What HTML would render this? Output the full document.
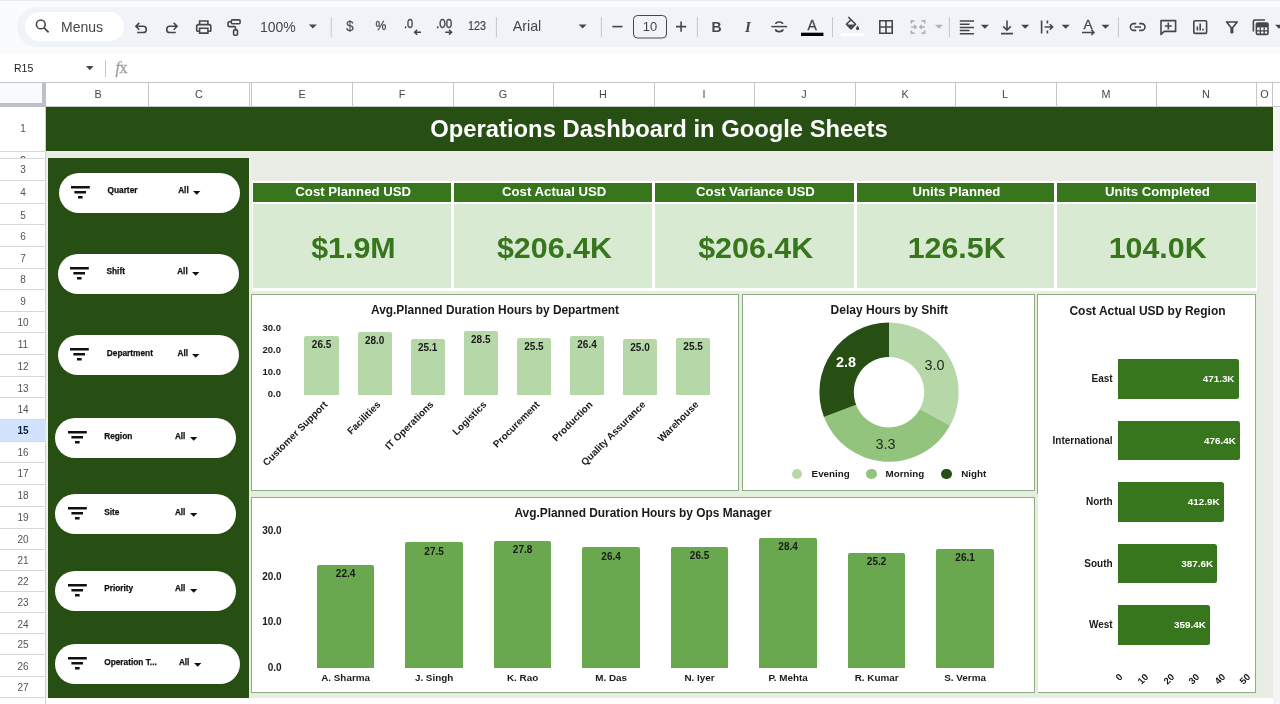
<!DOCTYPE html>
<html><head><meta charset="utf-8"><title>Operations Dashboard in Google Sheets</title>
<style>
*{box-sizing:border-box;margin:0;padding:0}
html,body{width:1280px;height:704px;overflow:hidden;background:#f9fbfd;font-family:"Liberation Sans",sans-serif;}
body{position:relative;will-change:transform}
.a{position:absolute}
.t{position:absolute;white-space:nowrap;line-height:1}
.c{transform:translate(-50%,-50%)}
.r{transform:translate(-100%,-50%)}
.l{transform:translate(0,-50%)}
.b{font-weight:bold}
svg{position:absolute;overflow:visible}
</style></head><body>

<div class="a" style="left:0px;top:0px;width:1280px;height:1px;background:#e7e9ee;"></div>
<div class="a" style="left:17px;top:7px;width:1300px;height:40px;background:#f0f3f8;border-radius:20px 0 0 20px;"></div>
<div class="a" style="left:25px;top:12px;width:99px;height:29px;background:#fff;border-radius:15px;"></div>
<div class="a" style="left:0px;top:55px;width:1280px;height:28px;background:#fff;"></div>
<div class="a" style="left:0px;top:82px;width:1280px;height:1px;background:#c4c7c5;"></div>
<svg style="left:0;top:0" width="1280" height="60" viewBox="0 0 1280 60"><circle cx="40.8" cy="24.4" r="4.4" fill="none" stroke="#444746" stroke-width="1.6"/><path d="M44 27.7L48.6 32.4" fill="none" stroke="#444746" stroke-width="1.7"/><path d="M139.3 22.9L135.9 26.3L139.3 29.7M136.2 26.3H143.2A3.1 3.1 0 0 1 143.2 32.5H137.2" fill="none" stroke="#444746" stroke-width="1.6" stroke-linejoin="miter"/><path d="M173.7 22.9L177.1 26.3L173.7 29.7M176.8 26.3H169.8A3.1 3.1 0 0 0 169.8 32.5H175.8" fill="none" stroke="#444746" stroke-width="1.6"/><path d="M199.6 24.6V21H207.9V24.6M199.6 31.2H197.3A0.8 0.8 0 0 1 196.7 30.4V26.4A1.8 1.8 0 0 1 198.5 24.6H209A1.8 1.8 0 0 1 210.8 26.4V30.4A0.8 0.8 0 0 1 210 31.2H207.9M199.6 28.3H207.9V33.1H199.6Z" fill="none" stroke="#444746" stroke-width="1.6"/><rect x="231.3" y="19.9" width="8.8" height="3.8" rx="1.1" fill="none" stroke="#444746" stroke-width="1.6"/><path d="M231.3 21.8H229.2A1.2 1.2 0 0 0 228 23V25.4A1.2 1.2 0 0 0 229.2 26.6H234.4A1.1 1.1 0 0 1 235.5 27.7V29.6" fill="none" stroke="#444746" stroke-width="1.6"/><rect x="233.6" y="29.9" width="3.9" height="5.3" rx="1" fill="none" stroke="#444746" stroke-width="1.6"/><path d="M308.8 24.6h8l-4.0 4z" fill="#444746"/><rect x="330.7" y="17" width="1" height="20" fill="#c7c7c7"/><path d="M421 32.2H414.6M417.2 29.8L414.6 32.2L417.2 34.6" fill="none" stroke="#444746" stroke-width="1.5"/><path d="M445.2 32.2H451.6M449 29.8L451.6 32.2L449 34.6" fill="none" stroke="#444746" stroke-width="1.5"/><rect x="495.9" y="17" width="1" height="20" fill="#c7c7c7"/><path d="M578.6 24.6h8l-4.0 4z" fill="#444746"/><rect x="600.9" y="17" width="1" height="20" fill="#c7c7c7"/><path d="M612.3 26.6H622.5" fill="none" stroke="#444746" stroke-width="1.6"/><rect x="633.5" y="15.5" width="33" height="22.5" rx="4" fill="none" stroke="#444746" stroke-width="1"/><path d="M676 26.6H686.2M681.1 21.5V31.7" fill="none" stroke="#444746" stroke-width="1.6"/><rect x="696.9" y="17" width="1" height="20" fill="#c7c7c7"/><path d="M771.3 26.6H787.1" fill="none" stroke="#444746" stroke-width="1.5"/><path d="M782.6 24.1C782.6 21.3 775.8 21.3 775.8 24.1M775.6 29.2C775.6 32.3 782.9 32.3 782.9 29.2" fill="none" stroke="#444746" stroke-width="1.7"/><rect x="801" y="32.7" width="22.4" height="3.3" fill="#000"/><rect x="832.0" y="17" width="1" height="20" fill="#c7c7c7"/><g transform="translate(0,-1.6)"><path d="M848.3 18.6L855.6 25.9L851 30.5L846.4 25.9L851 21.3" fill="none" stroke="#444746" stroke-width="1.6" stroke-linejoin="round"/><path d="M846.6 26H855.4L851 30.4Z" fill="#444746"/><path d="M857.6 27.2C858.6 28.6 859.2 29.4 859.2 30.2A1.6 1.6 0 0 1 856 30.2C856 29.4 856.6 28.6 857.6 27.2Z" fill="#444746"/></g><rect x="840.6" y="33" width="23.2" height="3.2" fill="#fff"/><path d="M879.8 20.8H892.2V33.2H879.8ZM886 20.8V33.2M879.8 27H892.2" fill="none" stroke="#444746" stroke-width="1.6"/><path d="M914.5 20.8H911.3V23.6M921.5 20.8H924.7V23.6M914.5 33.2H911.3V30.4M921.5 33.2H924.7V30.4M911 27H916M914.2 25.2L916 27L914.2 28.8M925 27H920M921.8 25.2L920 27L921.8 28.8" fill="none" stroke="#b0b3b5" stroke-width="1.7"/><path d="M935.0 24.8h8l-4.0 4z" fill="#b0b3b5"/><rect x="948.9" y="17" width="1" height="20" fill="#c7c7c7"/><path d="M959.8 21H974M959.8 24.2H969.5M959.8 27.4H974M959.8 30.6H969.5M959.8 33.8H974" fill="none" stroke="#444746" stroke-width="1.5"/><path d="M980.9 24.8h8l-4.0 4z" fill="#444746"/><path d="M1007 20.4V30M1003.2 26.4L1007 30.2L1010.8 26.4M1001 33.6H1013" fill="none" stroke="#444746" stroke-width="1.6"/><path d="M1021.2 24.8h8l-4.0 4z" fill="#444746"/><path d="M1041.6 20.6V33.4M1047.4 20.6V23.4M1047.4 30.6V33.4M1044.6 27H1052.6M1049.8 24.2L1052.6 27L1049.8 29.8" fill="none" stroke="#444746" stroke-width="1.6"/><path d="M1061.7 24.8h8l-4.0 4z" fill="#444746"/><path d="M1082 32.4H1094M1091.4 29.8L1094 32.4L1091.4 35" fill="none" stroke="#444746" stroke-width="1.5"/><path d="M1101.5 24.8h8l-4.0 4z" fill="#444746"/><rect x="1117.9" y="17" width="1" height="20" fill="#c7c7c7"/><path d="M1136.2 23.6H1133.8A3.4 3.4 0 0 0 1133.8 30.4H1136.2M1139.2 23.6H1141.6A3.4 3.4 0 0 1 1141.6 30.4H1139.2M1134.4 27H1141" fill="none" stroke="#444746" stroke-width="1.6"/><path d="M1161 20.6H1175.6V31.4H1164.2L1161 34.4Z" fill="none" stroke="#444746" stroke-width="1.6" stroke-linejoin="round"/><path d="M1164.8 26H1171.8M1168.3 22.6V29.4" fill="none" stroke="#444746" stroke-width="1.6"/><rect x="1193.8" y="20.8" width="12.8" height="12.6" rx="1.2" fill="none" stroke="#444746" stroke-width="1.6"/><path d="M1197.4 30.6V26.4M1200.2 30.6V23.6M1203 30.6V28.8" fill="none" stroke="#444746" stroke-width="1.6"/><path d="M1226.6 22H1237.2L1232.6 27.8V32.6H1231.2V27.8Z" fill="none" stroke="#444746" stroke-width="1.6" stroke-linejoin="round"/><path d="M1253.4 31.4V21.2A1.2 1.2 0 0 1 1254.6 20H1265" fill="none" stroke="#444746" stroke-width="1.6"/><rect x="1256.4" y="23" width="11.6" height="11.4" rx="1.2" fill="none" stroke="#444746" stroke-width="1.6"/><rect x="1256.4" y="23" width="11.6" height="4.4" fill="#444746"/><path d="M1260.3 27.2V34.4M1264.2 27.2V34.4M1256.4 30.9H1268" fill="none" stroke="#444746" stroke-width="1.3"/><path d="M1275.0 24.8h8l-4.0 4z" fill="#444746"/></svg>
<div class="t l" style="left:61px;top:27px;font-size:14px;color:#444746;">Menus</div>
<div class="t l" style="left:260px;top:27px;font-size:14px;color:#444746;">100%</div>
<div class="t c" style="left:349.8px;top:26.3px;font-size:14px;color:#444746;-webkit-text-stroke:0.15px #444746;transform:translate(-50%,-50%) scale(0.95,1);">$</div>
<div class="t c" style="left:381.2px;top:26.3px;font-size:13.5px;color:#444746;-webkit-text-stroke:0.3px #444746;transform:translate(-50%,-50%) scale(0.9,1);">%</div>
<div class="t l" style="left:404.4px;top:23.9px;font-size:13.6px;color:#444746;-webkit-text-stroke:0.4px #444746;transform-origin:0 50%;transform:translate(0,-50%) scale(0.82,0.96);">.0</div>
<div class="t l" style="left:436px;top:23.9px;font-size:13.6px;color:#444746;-webkit-text-stroke:0.4px #444746;transform-origin:0 50%;transform:translate(0,-50%) scale(0.86,0.96);">.00</div>
<div class="t c" style="left:477px;top:25.8px;font-size:12px;color:#444746;-webkit-text-stroke:0.2px #444746;transform:translate(-50%,-50%) scale(0.9,1);">123</div>
<div class="t l" style="left:512.7px;top:25.8px;font-size:14.3px;color:#444746;">Arial</div>
<div class="t c" style="left:649.8px;top:26.6px;font-size:13.6px;color:#444746;transform:translate(-50%,-50%) scale(0.95,1);">10</div>
<div class="t c" style="left:716.5px;top:27px;font-size:14px;color:#444746;font-weight:bold">B</div>
<div class="t c" style="left:748px;top:27px;font-size:15px;color:#444746;font-weight:bold;font-family:'Liberation Serif',serif"><i>I</i></div>
<div class="t c" style="left:812.2px;top:25px;font-size:14px;color:#444746;-webkit-text-stroke:0.3px #444746">A</div>
<div class="t c" style="left:1088px;top:25px;font-size:13.6px;color:#444746;-webkit-text-stroke:0.3px #444746">A</div>
<div class="t l" style="left:14px;top:68px;font-size:10.5px;color:#202124;">R15</div>
<svg style="left:85.6px;top:66px" width="7.6" height="4.2" viewBox="0 0 7.6 4.2"><path d="M0 0h7.6L3.8 4.2z" fill="#444746"/></svg>
<div class="a" style="left:105px;top:60px;width:1px;height:17px;background:#c7c7c7;"></div>
<div class="t l" style="left:115.5px;top:68px;font-size:16px;color:#9c9fa2;font-family:'Liberation Serif',serif;letter-spacing:-0.5px;-webkit-text-stroke:0.3px #9c9fa2;"><i>f</i>x</div>
<div class="a" style="left:0px;top:83px;width:1280px;height:24px;background:#fff;"></div>
<div class="a" style="left:0px;top:83px;width:42px;height:20px;background:#f8fafd;"></div>
<div class="a" style="left:41.5px;top:83px;width:4px;height:24px;background:#bdc1c6;"></div>
<div class="a" style="left:0px;top:102.5px;width:45.5px;height:4px;background:#bdc1c6;"></div>
<div class="a" style="left:46px;top:106px;width:1234px;height:1px;background:#c4c7c5;"></div>
<div class="t c" style="left:98px;top:94.4px;font-size:10.8px;color:#444746;">B</div>
<div class="t c" style="left:199px;top:94.4px;font-size:10.8px;color:#444746;">C</div>
<div class="t c" style="left:302px;top:94.4px;font-size:10.8px;color:#444746;">E</div>
<div class="t c" style="left:402px;top:94.4px;font-size:10.8px;color:#444746;">F</div>
<div class="t c" style="left:503px;top:94.4px;font-size:10.8px;color:#444746;">G</div>
<div class="t c" style="left:603px;top:94.4px;font-size:10.8px;color:#444746;">H</div>
<div class="t c" style="left:704px;top:94.4px;font-size:10.8px;color:#444746;">I</div>
<div class="t c" style="left:804px;top:94.4px;font-size:10.8px;color:#444746;">J</div>
<div class="t c" style="left:905px;top:94.4px;font-size:10.8px;color:#444746;">K</div>
<div class="t c" style="left:1005px;top:94.4px;font-size:10.8px;color:#444746;">L</div>
<div class="t c" style="left:1106px;top:94.4px;font-size:10.8px;color:#444746;">M</div>
<div class="t c" style="left:1206px;top:94.4px;font-size:10.8px;color:#444746;">N</div>
<div class="t c" style="left:1264.5px;top:94.4px;font-size:10.8px;color:#444746;">O</div>
<div class="a" style="left:148.0px;top:83px;width:1px;height:23px;background:#c4c7c5;"></div>
<div class="a" style="left:249.0px;top:83px;width:1px;height:23px;background:#c4c7c5;"></div>
<div class="a" style="left:251.0px;top:83px;width:1px;height:23px;background:#c4c7c5;"></div>
<div class="a" style="left:352.0px;top:83px;width:1px;height:23px;background:#c4c7c5;"></div>
<div class="a" style="left:452.5px;top:83px;width:1px;height:23px;background:#c4c7c5;"></div>
<div class="a" style="left:553.0px;top:83px;width:1px;height:23px;background:#c4c7c5;"></div>
<div class="a" style="left:653.5px;top:83px;width:1px;height:23px;background:#c4c7c5;"></div>
<div class="a" style="left:754.0px;top:83px;width:1px;height:23px;background:#c4c7c5;"></div>
<div class="a" style="left:854.5px;top:83px;width:1px;height:23px;background:#c4c7c5;"></div>
<div class="a" style="left:955.0px;top:83px;width:1px;height:23px;background:#c4c7c5;"></div>
<div class="a" style="left:1055.5px;top:83px;width:1px;height:23px;background:#c4c7c5;"></div>
<div class="a" style="left:1156.0px;top:83px;width:1px;height:23px;background:#c4c7c5;"></div>
<div class="a" style="left:1256.0px;top:83px;width:1px;height:23px;background:#c4c7c5;"></div>
<div class="a" style="left:1272.0px;top:83px;width:1px;height:23px;background:#c4c7c5;"></div>
<div class="a" style="left:0px;top:107px;width:46px;height:597px;background:#fff;"></div>
<div class="a" style="left:45px;top:107px;width:1px;height:597px;background:#cfd2d0;"></div>
<div class="a" style="left:0px;top:419.5px;width:45.5px;height:21.5px;background:#d3e3fd;"></div>
<div class="a" style="left:0px;top:150.5px;width:46px;height:1px;background:#d5d8d6;"></div>
<div class="a" style="left:0px;top:157.5px;width:46px;height:1px;background:#d5d8d6;"></div>
<div class="a" style="left:0px;top:180.0px;width:46px;height:1px;background:#d5d8d6;"></div>
<div class="a" style="left:0px;top:202.5px;width:46px;height:1px;background:#d5d8d6;"></div>
<div class="a" style="left:0px;top:224.0px;width:46px;height:1px;background:#d5d8d6;"></div>
<div class="a" style="left:0px;top:246.0px;width:46px;height:1px;background:#d5d8d6;"></div>
<div class="a" style="left:0px;top:268.0px;width:46px;height:1px;background:#d5d8d6;"></div>
<div class="a" style="left:0px;top:289.0px;width:46px;height:1px;background:#d5d8d6;"></div>
<div class="a" style="left:0px;top:310.5px;width:46px;height:1px;background:#d5d8d6;"></div>
<div class="a" style="left:0px;top:332.0px;width:46px;height:1px;background:#d5d8d6;"></div>
<div class="a" style="left:0px;top:354.0px;width:46px;height:1px;background:#d5d8d6;"></div>
<div class="a" style="left:0px;top:375.5px;width:46px;height:1px;background:#d5d8d6;"></div>
<div class="a" style="left:0px;top:397.0px;width:46px;height:1px;background:#d5d8d6;"></div>
<div class="a" style="left:0px;top:419.0px;width:46px;height:1px;background:#d5d8d6;"></div>
<div class="a" style="left:0px;top:440.5px;width:46px;height:1px;background:#d5d8d6;"></div>
<div class="a" style="left:0px;top:462.0px;width:46px;height:1px;background:#d5d8d6;"></div>
<div class="a" style="left:0px;top:483.9px;width:46px;height:1px;background:#d5d8d6;"></div>
<div class="a" style="left:0px;top:505.5px;width:46px;height:1px;background:#d5d8d6;"></div>
<div class="a" style="left:0px;top:527.5px;width:46px;height:1px;background:#d5d8d6;"></div>
<div class="a" style="left:0px;top:548.9px;width:46px;height:1px;background:#d5d8d6;"></div>
<div class="a" style="left:0px;top:570.0px;width:46px;height:1px;background:#d5d8d6;"></div>
<div class="a" style="left:0px;top:591.2px;width:46px;height:1px;background:#d5d8d6;"></div>
<div class="a" style="left:0px;top:612.3px;width:46px;height:1px;background:#d5d8d6;"></div>
<div class="a" style="left:0px;top:633.1px;width:46px;height:1px;background:#d5d8d6;"></div>
<div class="a" style="left:0px;top:654.2px;width:46px;height:1px;background:#d5d8d6;"></div>
<div class="a" style="left:0px;top:675.7px;width:46px;height:1px;background:#d5d8d6;"></div>
<div class="a" style="left:0px;top:697.0px;width:46px;height:1px;background:#d5d8d6;"></div>
<div class="t c" style="left:23px;top:128.6px;font-size:10px;color:#50545a;">1</div>
<div class="t c" style="left:23px;top:169.6px;font-size:10px;color:#50545a;">3</div>
<div class="t c" style="left:23px;top:192.6px;font-size:10px;color:#50545a;">4</div>
<div class="t c" style="left:23px;top:215.6px;font-size:10px;color:#50545a;">5</div>
<div class="t c" style="left:23px;top:236.6px;font-size:10px;color:#50545a;">6</div>
<div class="t c" style="left:23px;top:258.6px;font-size:10px;color:#50545a;">7</div>
<div class="t c" style="left:23px;top:279.6px;font-size:10px;color:#50545a;">8</div>
<div class="t c" style="left:23px;top:301.6px;font-size:10px;color:#50545a;">9</div>
<div class="t c" style="left:23px;top:322.6px;font-size:10px;color:#50545a;">10</div>
<div class="t c" style="left:23px;top:344.6px;font-size:10px;color:#50545a;">11</div>
<div class="t c" style="left:23px;top:366.6px;font-size:10px;color:#50545a;">12</div>
<div class="t c" style="left:23px;top:388.6px;font-size:10px;color:#50545a;">13</div>
<div class="t c" style="left:23px;top:409.6px;font-size:10px;color:#50545a;">14</div>
<div class="t c b" style="left:23px;top:430.6px;font-size:10px;color:#041e49;">15</div>
<div class="t c" style="left:23px;top:452.6px;font-size:10px;color:#50545a;">16</div>
<div class="t c" style="left:23px;top:473.6px;font-size:10px;color:#50545a;">17</div>
<div class="t c" style="left:23px;top:495.6px;font-size:10px;color:#50545a;">18</div>
<div class="t c" style="left:23px;top:517.6px;font-size:10px;color:#50545a;">19</div>
<div class="t c" style="left:23px;top:539.6px;font-size:10px;color:#50545a;">20</div>
<div class="t c" style="left:23px;top:560.6px;font-size:10px;color:#50545a;">21</div>
<div class="t c" style="left:23px;top:581.6px;font-size:10px;color:#50545a;">22</div>
<div class="t c" style="left:23px;top:602.6px;font-size:10px;color:#50545a;">23</div>
<div class="t c" style="left:23px;top:624.6px;font-size:10px;color:#50545a;">24</div>
<div class="t c" style="left:23px;top:644.6px;font-size:10px;color:#50545a;">25</div>
<div class="t c" style="left:23px;top:666.6px;font-size:10px;color:#50545a;">26</div>
<div class="t c" style="left:23px;top:687.6px;font-size:10px;color:#50545a;">27</div>
<div class="a" style="left:0;top:151.5px;width:45px;height:6px;overflow:hidden"><div class="t c" style="left:23px;top:8.5px;font-size:10.5px;color:#444746">2</div></div>
<div class="a" style="left:46px;top:107px;width:1234px;height:597px;background:#fff;"></div>
<div class="a" style="left:1273px;top:107px;width:7px;height:597px;background:#f4f5f4;"></div>
<div class="a" style="left:46px;top:151px;width:1227px;height:546.5px;background:#e9ede6;"></div>
<div class="a" style="left:46px;top:107px;width:1227px;height:44px;background:#274e13;"></div>
<div class="t c b" style="left:659px;top:128.8px;font-size:23.8px;color:#fff;">Operations Dashboard in Google Sheets</div>
<div class="a" style="left:46px;top:158px;width:205px;height:539.5px;background:#edf3e8;"></div>
<div class="a" style="left:48px;top:158px;width:201px;height:539.5px;background:#274e13;"></div>
<div class="a" style="left:58.5px;top:173px;width:181.5px;height:40px;background:#fff;border-radius:20px;"></div>
<svg style="left:71.1px;top:186.1px" width="19" height="13" viewBox="0 0 19 13"><path d="M0 0h18.8v2.4H0zM3.4 5h11.6v2.4H3.4zM7 10h4.6v2.4H7z" fill="#111"/></svg>
<div class="t l b" style="left:107.5px;top:190.0px;font-size:8.3px;color:#111;-webkit-text-stroke:0.25px #111;">Quarter</div>
<div class="t l b" style="left:178.2px;top:191.1px;font-size:8.2px;color:#111;-webkit-text-stroke:0.25px #111;">All</div>
<svg style="left:193.0px;top:190.8px" width="7.4" height="3.7" viewBox="0 0 7.4 3.7"><path d="M0 0h7.4L3.7 3.7z" fill="#111"/></svg>
<div class="a" style="left:57.5px;top:254px;width:181.5px;height:40px;background:#fff;border-radius:20px;"></div>
<svg style="left:70.1px;top:267.1px" width="19" height="13" viewBox="0 0 19 13"><path d="M0 0h18.8v2.4H0zM3.4 5h11.6v2.4H3.4zM7 10h4.6v2.4H7z" fill="#111"/></svg>
<div class="t l b" style="left:106.5px;top:271.0px;font-size:8.3px;color:#111;-webkit-text-stroke:0.25px #111;">Shift</div>
<div class="t l b" style="left:177.2px;top:272.1px;font-size:8.2px;color:#111;-webkit-text-stroke:0.25px #111;">All</div>
<svg style="left:192.0px;top:271.8px" width="7.4" height="3.7" viewBox="0 0 7.4 3.7"><path d="M0 0h7.4L3.7 3.7z" fill="#111"/></svg>
<div class="a" style="left:57.8px;top:335px;width:181.5px;height:40px;background:#fff;border-radius:20px;"></div>
<svg style="left:70.4px;top:348.1px" width="19" height="13" viewBox="0 0 19 13"><path d="M0 0h18.8v2.4H0zM3.4 5h11.6v2.4H3.4zM7 10h4.6v2.4H7z" fill="#111"/></svg>
<div class="t l b" style="left:106.8px;top:353.2px;font-size:8.3px;color:#111;-webkit-text-stroke:0.25px #111;">Department</div>
<div class="t l b" style="left:177.5px;top:354.3px;font-size:8.2px;color:#111;-webkit-text-stroke:0.25px #111;">All</div>
<svg style="left:192.3px;top:354.0px" width="7.4" height="3.7" viewBox="0 0 7.4 3.7"><path d="M0 0h7.4L3.7 3.7z" fill="#111"/></svg>
<div class="a" style="left:55.2px;top:418px;width:180.5px;height:40px;background:#fff;border-radius:20px;"></div>
<svg style="left:67.8px;top:431.1px" width="19" height="13" viewBox="0 0 19 13"><path d="M0 0h18.8v2.4H0zM3.4 5h11.6v2.4H3.4zM7 10h4.6v2.4H7z" fill="#111"/></svg>
<div class="t l b" style="left:104.2px;top:435.7px;font-size:8.3px;color:#111;-webkit-text-stroke:0.25px #111;">Region</div>
<div class="t l b" style="left:174.9px;top:436.8px;font-size:8.2px;color:#111;-webkit-text-stroke:0.25px #111;">All</div>
<svg style="left:189.7px;top:436.5px" width="7.4" height="3.7" viewBox="0 0 7.4 3.7"><path d="M0 0h7.4L3.7 3.7z" fill="#111"/></svg>
<div class="a" style="left:55.2px;top:493.7px;width:180.7px;height:40px;background:#fff;border-radius:20px;"></div>
<svg style="left:67.8px;top:506.8px" width="19" height="13" viewBox="0 0 19 13"><path d="M0 0h18.8v2.4H0zM3.4 5h11.6v2.4H3.4zM7 10h4.6v2.4H7z" fill="#111"/></svg>
<div class="t l b" style="left:104.2px;top:512.0px;font-size:8.3px;color:#111;-webkit-text-stroke:0.25px #111;">Site</div>
<div class="t l b" style="left:174.9px;top:513.1px;font-size:8.2px;color:#111;-webkit-text-stroke:0.25px #111;">All</div>
<svg style="left:189.7px;top:512.8px" width="7.4" height="3.7" viewBox="0 0 7.4 3.7"><path d="M0 0h7.4L3.7 3.7z" fill="#111"/></svg>
<div class="a" style="left:55.2px;top:570.6px;width:180.7px;height:40px;background:#fff;border-radius:20px;"></div>
<svg style="left:67.8px;top:583.7px" width="19" height="13" viewBox="0 0 19 13"><path d="M0 0h18.8v2.4H0zM3.4 5h11.6v2.4H3.4zM7 10h4.6v2.4H7z" fill="#111"/></svg>
<div class="t l b" style="left:104.2px;top:588.2px;font-size:8.3px;color:#111;-webkit-text-stroke:0.25px #111;">Priority</div>
<div class="t l b" style="left:174.9px;top:589.3px;font-size:8.2px;color:#111;-webkit-text-stroke:0.25px #111;">All</div>
<svg style="left:189.7px;top:589.0px" width="7.4" height="3.7" viewBox="0 0 7.4 3.7"><path d="M0 0h7.4L3.7 3.7z" fill="#111"/></svg>
<div class="a" style="left:55.2px;top:644.3px;width:184.8px;height:40px;background:#fff;border-radius:20px;"></div>
<svg style="left:67.8px;top:657.4px" width="19" height="13" viewBox="0 0 19 13"><path d="M0 0h18.8v2.4H0zM3.4 5h11.6v2.4H3.4zM7 10h4.6v2.4H7z" fill="#111"/></svg>
<div class="t l b" style="left:104.2px;top:662.3px;font-size:8.3px;color:#111;-webkit-text-stroke:0.25px #111;">Operation T...</div>
<div class="t l b" style="left:178.9px;top:663.4px;font-size:8.2px;color:#111;-webkit-text-stroke:0.25px #111;">All</div>
<svg style="left:193.7px;top:663.1px" width="7.4" height="3.7" viewBox="0 0 7.4 3.7"><path d="M0 0h7.4L3.7 3.7z" fill="#111"/></svg>
<div class="a" style="left:251.5px;top:180.5px;width:1005.5px;height:110px;background:#fff;"></div>
<div class="a" style="left:253px;top:182.5px;width:198px;height:19px;background:#38761d;"></div>
<div class="a" style="left:253px;top:204px;width:198px;height:84px;background:#d9ead3;"></div>
<div class="t c b" style="left:353.2px;top:192.3px;font-size:13.2px;color:#fff;">Cost Planned USD</div>
<div class="t c b" style="left:353.4px;top:246.8px;font-size:30.4px;color:#38761d;">$1.9M</div>
<div class="a" style="left:454px;top:182.5px;width:198px;height:19px;background:#38761d;"></div>
<div class="a" style="left:454px;top:204px;width:198px;height:84px;background:#d9ead3;"></div>
<div class="t c b" style="left:554.2px;top:192.3px;font-size:13.2px;color:#fff;">Cost Actual USD</div>
<div class="t c b" style="left:554.4px;top:246.8px;font-size:30.4px;color:#38761d;">$206.4K</div>
<div class="a" style="left:655px;top:182.5px;width:198.5px;height:19px;background:#38761d;"></div>
<div class="a" style="left:655px;top:204px;width:198.5px;height:84px;background:#d9ead3;"></div>
<div class="t c b" style="left:755.45px;top:192.3px;font-size:13.2px;color:#fff;">Cost Variance USD</div>
<div class="t c b" style="left:755.65px;top:246.8px;font-size:30.4px;color:#38761d;">$206.4K</div>
<div class="a" style="left:856.5px;top:182.5px;width:197.5px;height:19px;background:#38761d;"></div>
<div class="a" style="left:856.5px;top:204px;width:197.5px;height:84px;background:#d9ead3;"></div>
<div class="t c b" style="left:956.45px;top:192.3px;font-size:13.2px;color:#fff;">Units Planned</div>
<div class="t c b" style="left:956.65px;top:246.8px;font-size:30.4px;color:#38761d;">126.5K</div>
<div class="a" style="left:1057px;top:182.5px;width:198.5px;height:19px;background:#38761d;"></div>
<div class="a" style="left:1057px;top:204px;width:198.5px;height:84px;background:#d9ead3;"></div>
<div class="t c b" style="left:1157.45px;top:192.3px;font-size:13.2px;color:#fff;">Units Completed</div>
<div class="t c b" style="left:1157.65px;top:246.8px;font-size:30.4px;color:#38761d;">104.0K</div>
<div class="a" style="left:249.0px;top:291.5px;width:492.5px;height:201.5px;background:#e4f0dc;"></div>
<div class="a" style="left:250.5px;top:294px;width:488.5px;height:196.5px;background:#fff;border:1px solid #8fab87;"></div>
<div class="t c b" style="left:495px;top:311px;font-size:11.9px;color:#1a1a1a;">Avg.Planned Duration Hours by Department</div>
<div class="t r b" style="left:281px;top:328px;font-size:9.5px;color:#1a1a1a;">30.0</div>
<div class="t r b" style="left:281px;top:350px;font-size:9.5px;color:#1a1a1a;">20.0</div>
<div class="t r b" style="left:281px;top:372px;font-size:9.5px;color:#1a1a1a;">10.0</div>
<div class="t r b" style="left:281px;top:394px;font-size:9.5px;color:#1a1a1a;">0.0</div>
<div class="a" style="left:304.4px;top:335.5px;width:34.4px;height:59.2px;background:#b6d7a8;border-radius:2px 2px 0 0;"></div>
<div class="t c b" style="left:321.6px;top:344.6px;font-size:10px;color:#1a1a1a;">26.5</div>
<div class="t b" style="left:325.9px;top:403.0px;font-size:9.9px;color:#1a1a1a;transform-origin:100% 50%;transform:translate(-100%,-50%) rotate(-45deg)">Customer Support</div>
<div class="a" style="left:357.5px;top:332.1px;width:34.4px;height:62.6px;background:#b6d7a8;border-radius:2px 2px 0 0;"></div>
<div class="t c b" style="left:374.7px;top:341.2px;font-size:10px;color:#1a1a1a;">28.0</div>
<div class="t b" style="left:379.0px;top:403.0px;font-size:9.9px;color:#1a1a1a;transform-origin:100% 50%;transform:translate(-100%,-50%) rotate(-45deg)">Facilities</div>
<div class="a" style="left:410.5px;top:338.6px;width:34.4px;height:56.1px;background:#b6d7a8;border-radius:2px 2px 0 0;"></div>
<div class="t c b" style="left:427.7px;top:347.7px;font-size:10px;color:#1a1a1a;">25.1</div>
<div class="t b" style="left:432.0px;top:403.0px;font-size:9.9px;color:#1a1a1a;transform-origin:100% 50%;transform:translate(-100%,-50%) rotate(-45deg)">IT Operations</div>
<div class="a" style="left:463.6px;top:331.0px;width:34.4px;height:63.7px;background:#b6d7a8;border-radius:2px 2px 0 0;"></div>
<div class="t c b" style="left:480.8px;top:340.1px;font-size:10px;color:#1a1a1a;">28.5</div>
<div class="t b" style="left:485.1px;top:403.0px;font-size:9.9px;color:#1a1a1a;transform-origin:100% 50%;transform:translate(-100%,-50%) rotate(-45deg)">Logistics</div>
<div class="a" style="left:516.7px;top:337.7px;width:34.4px;height:57.0px;background:#b6d7a8;border-radius:2px 2px 0 0;"></div>
<div class="t c b" style="left:533.9px;top:346.8px;font-size:10px;color:#1a1a1a;">25.5</div>
<div class="t b" style="left:538.2px;top:403.0px;font-size:9.9px;color:#1a1a1a;transform-origin:100% 50%;transform:translate(-100%,-50%) rotate(-45deg)">Procurement</div>
<div class="a" style="left:569.8px;top:335.7px;width:34.4px;height:59.0px;background:#b6d7a8;border-radius:2px 2px 0 0;"></div>
<div class="t c b" style="left:587.0px;top:344.8px;font-size:10px;color:#1a1a1a;">26.4</div>
<div class="t b" style="left:591.2px;top:403.0px;font-size:9.9px;color:#1a1a1a;transform-origin:100% 50%;transform:translate(-100%,-50%) rotate(-45deg)">Production</div>
<div class="a" style="left:622.8px;top:338.8px;width:34.4px;height:55.9px;background:#b6d7a8;border-radius:2px 2px 0 0;"></div>
<div class="t c b" style="left:640.0px;top:347.9px;font-size:10px;color:#1a1a1a;">25.0</div>
<div class="t b" style="left:644.3px;top:403.0px;font-size:9.9px;color:#1a1a1a;transform-origin:100% 50%;transform:translate(-100%,-50%) rotate(-45deg)">Quality Assurance</div>
<div class="a" style="left:675.9px;top:337.7px;width:34.4px;height:57.0px;background:#b6d7a8;border-radius:2px 2px 0 0;"></div>
<div class="t c b" style="left:693.1px;top:346.8px;font-size:10px;color:#1a1a1a;">25.5</div>
<div class="t b" style="left:697.4px;top:403.0px;font-size:9.9px;color:#1a1a1a;transform-origin:100% 50%;transform:translate(-100%,-50%) rotate(-45deg)">Warehouse</div>
<div class="a" style="left:740.3px;top:291.5px;width:297.2px;height:201.5px;background:#e4f0dc;"></div>
<div class="a" style="left:741.8px;top:294px;width:293.2px;height:196.5px;background:#fff;border:1px solid #8fab87;"></div>
<div class="t c b" style="left:889.3px;top:310px;font-size:12px;color:#1a1a1a;">Delay Hours by Shift</div>
<svg style="left:0;top:0" width="1280" height="704" viewBox="0 0 1280 704"><path d="M889.00 322.60A69.6 69.6 0 0 1 950.06 425.60L919.88 409.09A35.2 35.2 0 0 0 889.00 357.00Z" fill="#b6d7a8"/><path d="M950.06 425.60A69.6 69.6 0 0 1 823.92 416.88L856.09 404.68A35.2 35.2 0 0 0 919.88 409.09Z" fill="#93c47d"/><path d="M823.92 416.88A69.6 69.6 0 0 1 889.00 322.60L889.00 357.00A35.2 35.2 0 0 0 856.09 404.68Z" fill="#274e13"/></svg>
<div class="t c" style="left:934.4px;top:365.3px;font-size:14.4px;color:#1f2a1a;">3.0</div>
<div class="t c" style="left:885.5px;top:443.6px;font-size:14.4px;color:#1f2a1a;">3.3</div>
<div class="t c b" style="left:845.9px;top:362px;font-size:14.4px;color:#fff;">2.8</div>
<div class="a" style="left:791.6px;top:468.6px;width:10.8px;height:10.8px;background:#b6d7a8;border-radius:50%;"></div>
<div class="t l b" style="left:811.6px;top:474px;font-size:9.8px;color:#1a1a1a;">Evening</div>
<div class="a" style="left:866.4px;top:468.6px;width:10.8px;height:10.8px;background:#93c47d;border-radius:50%;"></div>
<div class="t l b" style="left:885.5px;top:474px;font-size:9.8px;color:#1a1a1a;">Morning</div>
<div class="a" style="left:941.2px;top:468.6px;width:10.8px;height:10.8px;background:#274e13;border-radius:50%;"></div>
<div class="t l b" style="left:961.2px;top:474px;font-size:9.8px;color:#1a1a1a;">Night</div>
<div class="a" style="left:1035.3px;top:291.5px;width:223.3px;height:404.2px;background:#e4f0dc;"></div>
<div class="a" style="left:1036.8px;top:294px;width:219.3px;height:399.2px;background:#fff;border:1px solid #8fab87;"></div>
<div class="t c b" style="left:1147.5px;top:311px;font-size:12px;color:#1a1a1a;">Cost Actual USD by Region</div>
<div class="a" style="left:1118px;top:359.2px;width:120.5px;height:39.4px;background:#38761d;border-radius:0 2.5px 2.5px 0;"></div>
<div class="t r b" style="left:1112.6px;top:379.2px;font-size:10px;color:#1a1a1a;">East</div>
<div class="t r b" style="left:1234.5px;top:379.4px;font-size:9.9px;color:#fff;">471.3K</div>
<div class="a" style="left:1118px;top:420.7px;width:121.8px;height:39.4px;background:#38761d;border-radius:0 2.5px 2.5px 0;"></div>
<div class="t r b" style="left:1112.6px;top:440.7px;font-size:10px;color:#1a1a1a;">International</div>
<div class="t r b" style="left:1235.8px;top:440.9px;font-size:9.9px;color:#fff;">476.4K</div>
<div class="a" style="left:1118px;top:482.2px;width:105.6px;height:39.4px;background:#38761d;border-radius:0 2.5px 2.5px 0;"></div>
<div class="t r b" style="left:1112.6px;top:502.2px;font-size:10px;color:#1a1a1a;">North</div>
<div class="t r b" style="left:1219.6px;top:502.4px;font-size:9.9px;color:#fff;">412.9K</div>
<div class="a" style="left:1118px;top:543.7px;width:99.1px;height:39.4px;background:#38761d;border-radius:0 2.5px 2.5px 0;"></div>
<div class="t r b" style="left:1112.6px;top:563.7px;font-size:10px;color:#1a1a1a;">South</div>
<div class="t r b" style="left:1213.1px;top:563.9px;font-size:9.9px;color:#fff;">387.6K</div>
<div class="a" style="left:1118px;top:605.2px;width:91.9px;height:39.4px;background:#38761d;border-radius:0 2.5px 2.5px 0;"></div>
<div class="t r b" style="left:1112.6px;top:625.2px;font-size:10px;color:#1a1a1a;">West</div>
<div class="t r b" style="left:1205.9px;top:625.4px;font-size:9.9px;color:#fff;">359.4K</div>
<div class="t b" style="left:1118.5px;top:676.6px;font-size:9.5px;color:#1a1a1a;transform:translate(-50%,-50%) rotate(-45deg)">0</div>
<div class="t b" style="left:1143.0px;top:678.9px;font-size:9.5px;color:#1a1a1a;transform:translate(-50%,-50%) rotate(-45deg)">10</div>
<div class="t b" style="left:1168.5px;top:678.9px;font-size:9.5px;color:#1a1a1a;transform:translate(-50%,-50%) rotate(-45deg)">20</div>
<div class="t b" style="left:1194.0px;top:678.9px;font-size:9.5px;color:#1a1a1a;transform:translate(-50%,-50%) rotate(-45deg)">30</div>
<div class="t b" style="left:1219.5px;top:678.9px;font-size:9.5px;color:#1a1a1a;transform:translate(-50%,-50%) rotate(-45deg)">40</div>
<div class="t b" style="left:1245.0px;top:678.9px;font-size:9.5px;color:#1a1a1a;transform:translate(-50%,-50%) rotate(-45deg)">50</div>
<div class="a" style="left:249.0px;top:494.1px;width:788.5px;height:201.8px;background:#e4f0dc;"></div>
<div class="a" style="left:250.5px;top:496.6px;width:784.5px;height:196.8px;background:#fff;border:1px solid #8fab87;"></div>
<div class="t c b" style="left:643px;top:514px;font-size:11.9px;color:#1a1a1a;">Avg.Planned Duration Hours by Ops Manager</div>
<div class="t r b" style="left:281.6px;top:530.6px;font-size:10px;color:#1a1a1a;">30.0</div>
<div class="t r b" style="left:281.6px;top:576.5px;font-size:10px;color:#1a1a1a;">20.0</div>
<div class="t r b" style="left:281.6px;top:622.3px;font-size:10px;color:#1a1a1a;">10.0</div>
<div class="t r b" style="left:281.6px;top:668.1px;font-size:10px;color:#1a1a1a;">0.0</div>
<div class="a" style="left:316.9px;top:564.6px;width:57.4px;height:103.7px;background:#6aa84f;border-radius:2px 2px 0 0;"></div>
<div class="t c b" style="left:345.6px;top:573.8px;font-size:10px;color:#1a1a1a;">22.4</div>
<div class="t c b" style="left:345.6px;top:678.4px;font-size:9.9px;color:#1a1a1a;">A. Sharma</div>
<div class="a" style="left:405.4px;top:542.3px;width:57.4px;height:126.0px;background:#6aa84f;border-radius:2px 2px 0 0;"></div>
<div class="t c b" style="left:434.1px;top:551.5px;font-size:10px;color:#1a1a1a;">27.5</div>
<div class="t c b" style="left:434.1px;top:678.4px;font-size:9.9px;color:#1a1a1a;">J. Singh</div>
<div class="a" style="left:493.9px;top:540.9px;width:57.4px;height:127.4px;background:#6aa84f;border-radius:2px 2px 0 0;"></div>
<div class="t c b" style="left:522.6px;top:550.1px;font-size:10px;color:#1a1a1a;">27.8</div>
<div class="t c b" style="left:522.6px;top:678.4px;font-size:9.9px;color:#1a1a1a;">K. Rao</div>
<div class="a" style="left:582.4px;top:547.3px;width:57.4px;height:121.0px;background:#6aa84f;border-radius:2px 2px 0 0;"></div>
<div class="t c b" style="left:611.1px;top:556.5px;font-size:10px;color:#1a1a1a;">26.4</div>
<div class="t c b" style="left:611.1px;top:678.4px;font-size:9.9px;color:#1a1a1a;">M. Das</div>
<div class="a" style="left:670.9px;top:546.9px;width:57.4px;height:121.4px;background:#6aa84f;border-radius:2px 2px 0 0;"></div>
<div class="t c b" style="left:699.6px;top:556.1px;font-size:10px;color:#1a1a1a;">26.5</div>
<div class="t c b" style="left:699.6px;top:678.4px;font-size:9.9px;color:#1a1a1a;">N. Iyer</div>
<div class="a" style="left:759.4px;top:538.1px;width:57.4px;height:130.2px;background:#6aa84f;border-radius:2px 2px 0 0;"></div>
<div class="t c b" style="left:788.1px;top:547.3px;font-size:10px;color:#1a1a1a;">28.4</div>
<div class="t c b" style="left:788.1px;top:678.4px;font-size:9.9px;color:#1a1a1a;">P. Mehta</div>
<div class="a" style="left:847.9px;top:552.8px;width:57.4px;height:115.5px;background:#6aa84f;border-radius:2px 2px 0 0;"></div>
<div class="t c b" style="left:876.6px;top:562.0px;font-size:10px;color:#1a1a1a;">25.2</div>
<div class="t c b" style="left:876.6px;top:678.4px;font-size:9.9px;color:#1a1a1a;">R. Kumar</div>
<div class="a" style="left:936.4px;top:548.7px;width:57.4px;height:119.6px;background:#6aa84f;border-radius:2px 2px 0 0;"></div>
<div class="t c b" style="left:965.1px;top:557.9px;font-size:10px;color:#1a1a1a;">26.1</div>
<div class="t c b" style="left:965.1px;top:678.4px;font-size:9.9px;color:#1a1a1a;">S. Verma</div>
</body></html>
